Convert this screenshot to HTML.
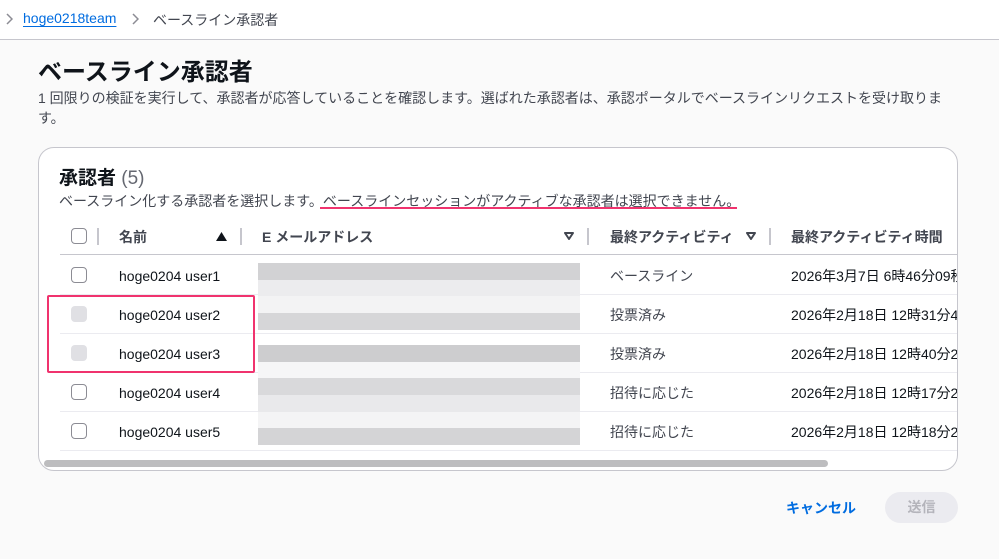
<!DOCTYPE html>
<html><head><meta charset="utf-8"><style>
*{margin:0;padding:0;box-sizing:border-box}
body{width:999px;height:559px;background:#fafafa;font-family:"Liberation Sans","Noto Sans CJK JP",sans-serif;color:#0f141a;position:relative;overflow:hidden}
.a{position:absolute;white-space:nowrap}
.top{position:absolute;left:0;top:0;width:999px;height:40px;background:#fff;border-bottom:1px solid #c6c6cd}
.card{position:absolute;left:38px;top:147px;width:920px;height:324px;background:#fff;border:1px solid #c6c6cd;border-radius:16px;overflow:hidden}
.cb{position:absolute;width:16px;height:16px;border:1.5px solid #8c8c94;border-radius:4px;background:#fff}
.cb.d{border:none;background:#e0e0e4}
.hl{position:absolute;height:1px;background:#ebebf0}
.sep{position:absolute;width:2px;height:17px;background:#c6c6cd;top:228px}
.t{font-size:14px}
.n{font-size:14px;margin-top:2px}
.m{position:absolute;left:258px;width:322px;height:16.5px}
</style></head><body>
<div class="top"></div>
<svg class="a" style="left:5px;top:13px" width="8" height="12" viewBox="0 0 8 12"><path d="M2 1l5 5-5 5" fill="none" stroke="#8c8c94" stroke-width="1.5"/></svg>
<div class="a" style="left:23px;top:10px;font-size:14px;color:#006ce0;text-decoration:underline;text-underline-offset:3px">hoge0218team</div>
<svg class="a" style="left:131px;top:13px" width="8" height="12" viewBox="0 0 8 12"><path d="M2 1l5 5-5 5" fill="none" stroke="#8c8c94" stroke-width="1.5"/></svg>
<div class="a" style="left:153px;top:10px;font-size:14px;color:#424650">ベースライン承認者</div>
<div class="a" style="left:38px;top:52px;font-size:24px;font-weight:bold">ベースライン承認者</div>
<div class="a" style="left:38px;top:88px;font-size:14px;color:#424650;line-height:20px;white-space:normal;width:930px">1 回限りの検証を実行して、承認者が応答していることを確認します。選ばれた承認者は、承認ポータルでベースラインリクエストを受け取ります。</div>
<div class="card"></div>
<div class="a" style="left:59px;top:163px;font-size:19px;font-weight:bold">承認者 <span style="font-weight:normal;color:#656871">(5)</span></div>
<div class="a" style="left:59px;top:191px;font-size:14px;color:#424650">ベースライン化する承認者を選択します。ベースラインセッションがアクティブな承認者は選択できません。</div>
<div class="a" style="left:320px;top:207px;width:417px;height:2px;background:#f0336e"></div>
<div class="cb" style="left:71px;top:228px"></div>
<div class="sep" style="left:97px"></div>
<div class="a t" style="left:119px;top:227px;font-weight:bold;color:#424650">名前</div>
<svg class="a" style="left:216px;top:232px" width="11" height="9" viewBox="0 0 11 9"><path d="M5.5 0L11 9H0z" fill="#0f141a"/></svg>
<div class="sep" style="left:240px"></div>
<div class="a t" style="left:262px;top:227px;font-weight:bold;color:#424650">E メールアドレス</div>
<svg class="a" style="left:564px;top:232px" width="10" height="8" viewBox="0 0 10 8"><path d="M1 1h8L5 7z" fill="none" stroke="#424650" stroke-width="2" stroke-linejoin="round"/></svg>
<div class="sep" style="left:587px"></div>
<div class="a t" style="left:610px;top:227px;font-weight:bold;color:#424650">最終アクティビティ</div>
<svg class="a" style="left:746px;top:232px" width="10" height="8" viewBox="0 0 10 8"><path d="M1 1h8L5 7z" fill="none" stroke="#424650" stroke-width="2" stroke-linejoin="round"/></svg>
<div class="sep" style="left:769px"></div>
<div class="a t" style="left:791px;top:227px;font-weight:bold;color:#424650">最終アクティビティ時間</div>
<div class="hl" style="left:60px;top:254px;width:897px;background:#c6c6cd"></div>
<div class="hl" style="left:60px;top:294px;width:897px"></div>
<div class="hl" style="left:60px;top:333px;width:897px"></div>
<div class="hl" style="left:60px;top:372px;width:897px"></div>
<div class="hl" style="left:60px;top:411px;width:897px"></div>
<div class="hl" style="left:60px;top:450px;width:897px"></div>
<div class="m" style="top:263px;background:#d2d2d4"></div>
<div class="m" style="top:280px;background:#ececee"></div>
<div class="m" style="top:296px;background:#f3f3f4"></div>
<div class="m" style="top:313px;background:#d6d6d8"></div>
<div class="m" style="top:345px;background:#cdcdcf"></div>
<div class="m" style="top:362px;background:#f6f6f7"></div>
<div class="m" style="top:378px;background:#d9d9db"></div>
<div class="m" style="top:395px;background:#e9e9eb"></div>
<div class="m" style="top:412px;background:#f4f4f5"></div>
<div class="m" style="top:428px;background:#d4d4d6"></div>
<div class="cb" style="left:71px;top:267px"></div>
<div class="cb d" style="left:71px;top:306px"></div>
<div class="cb d" style="left:71px;top:345px"></div>
<div class="cb" style="left:71px;top:384px"></div>
<div class="cb" style="left:71px;top:423px"></div>
<div class="a n" style="left:119px;top:266px">hoge0204 user1</div>
<div class="a n" style="left:119px;top:305px">hoge0204 user2</div>
<div class="a n" style="left:119px;top:344px">hoge0204 user3</div>
<div class="a n" style="left:119px;top:383px">hoge0204 user4</div>
<div class="a n" style="left:119px;top:422px">hoge0204 user5</div>
<div class="a t" style="left:610px;top:266px;color:#424650">ベースライン</div>
<div class="a t" style="left:610px;top:305px;color:#424650">投票済み</div>
<div class="a t" style="left:610px;top:344px;color:#424650">投票済み</div>
<div class="a t" style="left:610px;top:383px;color:#424650">招待に応じた</div>
<div class="a t" style="left:610px;top:422px;color:#424650">招待に応じた</div>
<div style="position:absolute;left:791px;top:262px;width:166px;height:190px;overflow:hidden">
<div class="a t" style="left:0;top:4px">2026年3月7日 6時46分09秒</div>
<div class="a t" style="left:0;top:43px">2026年2月18日 12時31分42秒</div>
<div class="a t" style="left:0;top:82px">2026年2月18日 12時40分23秒</div>
<div class="a t" style="left:0;top:121px">2026年2月18日 12時17分23秒</div>
<div class="a t" style="left:0;top:160px">2026年2月18日 12時18分23秒</div>
</div>
<div class="a" style="left:44px;top:460px;width:784px;height:7px;border-radius:4px;background:#bdbdbf"></div>
<div class="a" style="left:47px;top:295px;width:208px;height:78px;border:2px solid #f0336e;border-radius:2px"></div>
<div class="a" style="left:786px;top:498px;font-size:14px;font-weight:bold;color:#006ce0">キャンセル</div>
<div class="a" style="left:885px;top:492px;width:73px;height:31px;border-radius:16px;background:#ebebf0;color:#b4b4bb;font-size:14px;font-weight:bold;text-align:center;line-height:31px">送信</div>
</body></html>
